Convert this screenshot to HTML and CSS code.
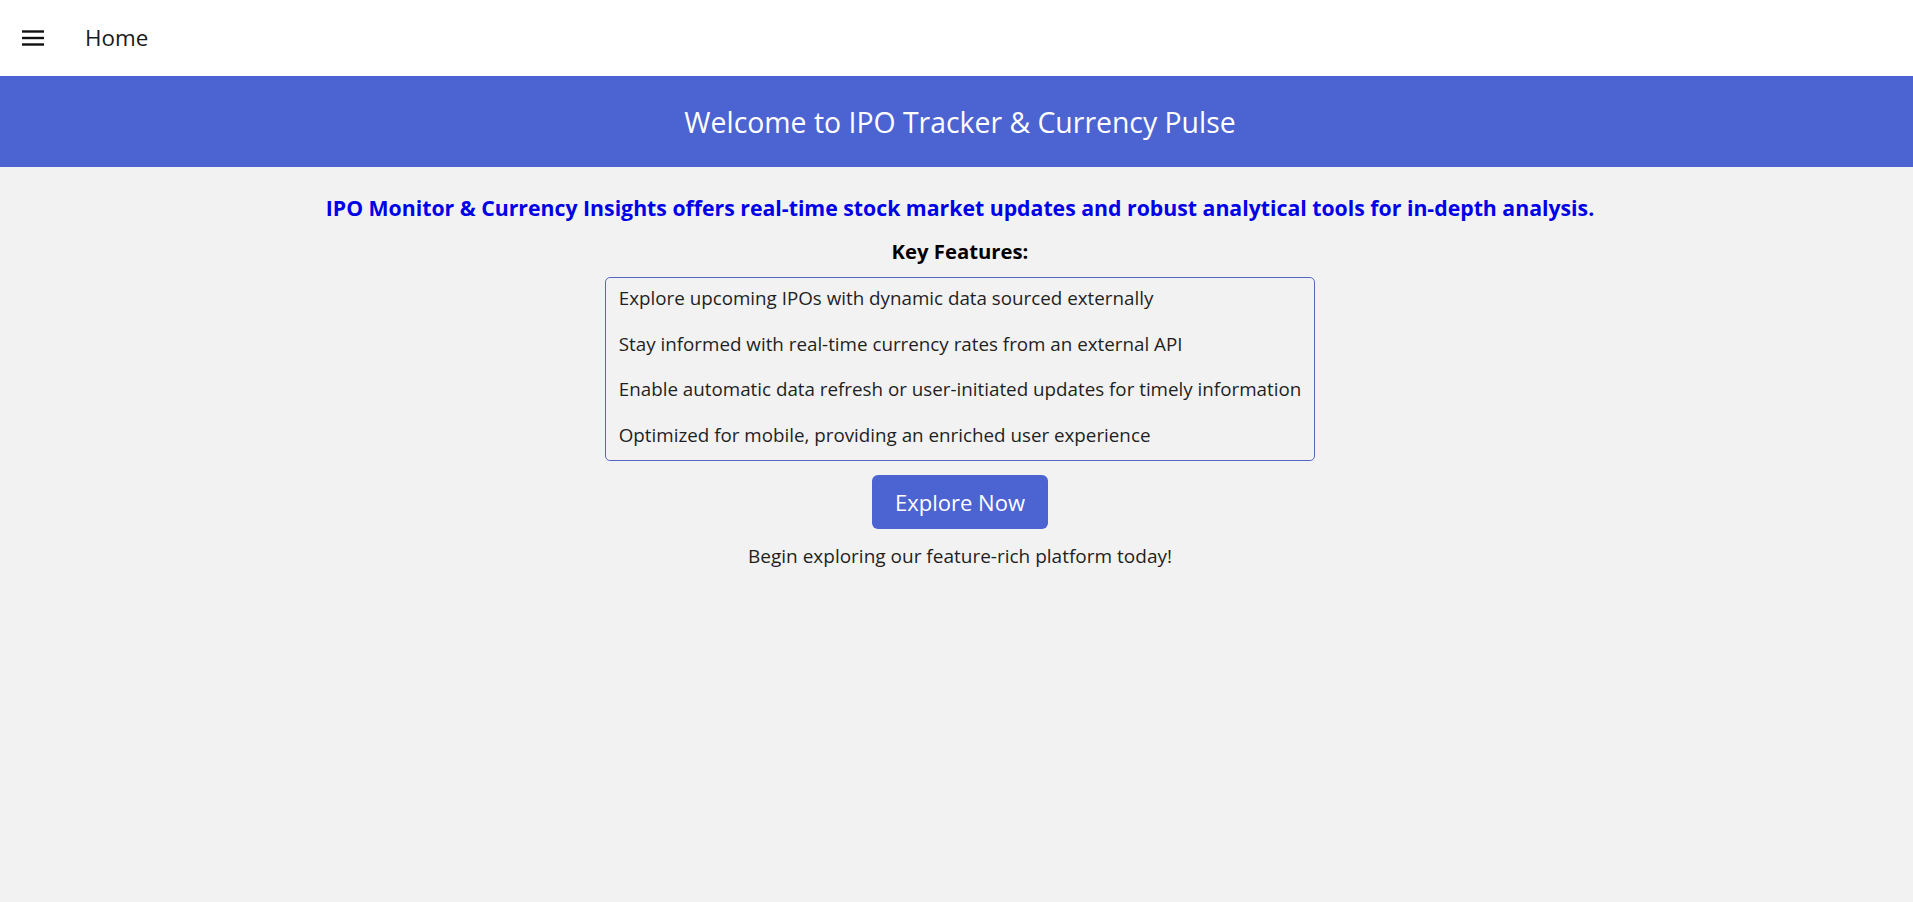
FILE: index.html
```html
<!DOCTYPE html>
<html lang="en">
<head>
<meta charset="utf-8">
<title>IPO Tracker &amp; Currency Pulse</title>
<link rel="stylesheet" href="styles.css">
</head>
<body>
  <header class="topbar">
    <button class="menu-btn" aria-label="menu">
      <svg width="22" height="16" viewBox="0 0 22 16" aria-hidden="true">
        <rect x="0" y="0.3" width="22" height="2.4" fill="#111"/>
        <rect x="0" y="6.8" width="22" height="2.4" fill="#111"/>
        <rect x="0" y="13.3" width="22" height="2.4" fill="#111"/>
      </svg>
    </button>
    <span class="topbar-title">Home</span>
  </header>

  <section class="banner">
    <h1 class="banner-title">Welcome to IPO Tracker &amp; Currency Pulse</h1>
  </section>

  <main class="content">
    <p class="lead">IPO Monitor &amp; Currency Insights offers real-time stock market updates and robust analytical tools for in-depth analysis.</p>
    <h2 class="features-title">Key Features:</h2>
    <ul class="features">
      <li>Explore upcoming IPOs with dynamic data sourced externally</li>
      <li>Stay informed with real-time currency rates from an external API</li>
      <li>Enable automatic data refresh or user-initiated updates for timely information</li>
      <li>Optimized for mobile, providing an enriched user experience</li>
    </ul>
    <button class="cta">Explore Now</button>
    <p class="outro">Begin exploring our feature-rich platform today!</p>
  </main>
</body>
</html>
```

FILE: styles.css
```css
* {
  box-sizing: border-box;
}

html, body {
  margin: 0;
  padding: 0;
}

body {
  background: #f2f2f2;
  font-family: "Open Sans", "Noto Sans", "Liberation Sans", sans-serif;
  color: #1f1f1f;
  min-height: 902px;
}

.topbar {
  height: 76px;
  background: #ffffff;
  display: flex;
  align-items: center;
  padding-left: 22px;
  gap: 41px;
}

.menu-btn {
  border: 0;
  background: transparent;
  padding: 0;
  margin: 0;
  width: 22px;
  height: 16px;
  display: flex;
  cursor: pointer;
}

.topbar-title {
  font-size: 22.4px;
  font-weight: 500;
  color: #1a1a1a;
  line-height: 30px;
}

.banner {
  background: #4c63d2;
  padding: 26px 0 25px 7px;
}

.banner-title {
  margin: 0;
  text-align: center;
  color: #ffffff;
  font-size: 28.4px;
  font-weight: 400;
  line-height: 40px;
}

.content {
  display: flex;
  flex-direction: column;
  align-items: center;
  padding-left: 7px;
}

.lead {
  margin: 26px 0 0;
  color: #0000e6;
  font-size: 21.25px;
  font-weight: 700;
  line-height: 30px;
  text-align: center;
}

.features-title {
  margin: 14px 0 0;
  font-size: 20.3px;
  font-weight: 700;
  line-height: 28px;
  color: #000;
}

.features {
  list-style: none;
  margin: 12px 0 0;
  padding: 0 13px;
  border: 1px solid #5567c4;
  border-radius: 5px;
}

.features li {
  font-size: 18.8px;
  line-height: 25.5px;
  padding: 8px 0 12px;
  color: #1f1f1f;
  white-space: nowrap;
}

.cta {
  margin-top: 14px;
  background: #4c63d2;
  color: #ffffff;
  border: 0;
  border-radius: 6px;
  font-family: inherit;
  font-size: 22px;
  line-height: 30px;
  padding: 12px 0;
  width: 176px;
  white-space: nowrap;
  cursor: pointer;
}

.outro {
  margin: 14px 0 0;
  font-size: 19px;
  line-height: 26px;
  color: #1f1f1f;
}
```
